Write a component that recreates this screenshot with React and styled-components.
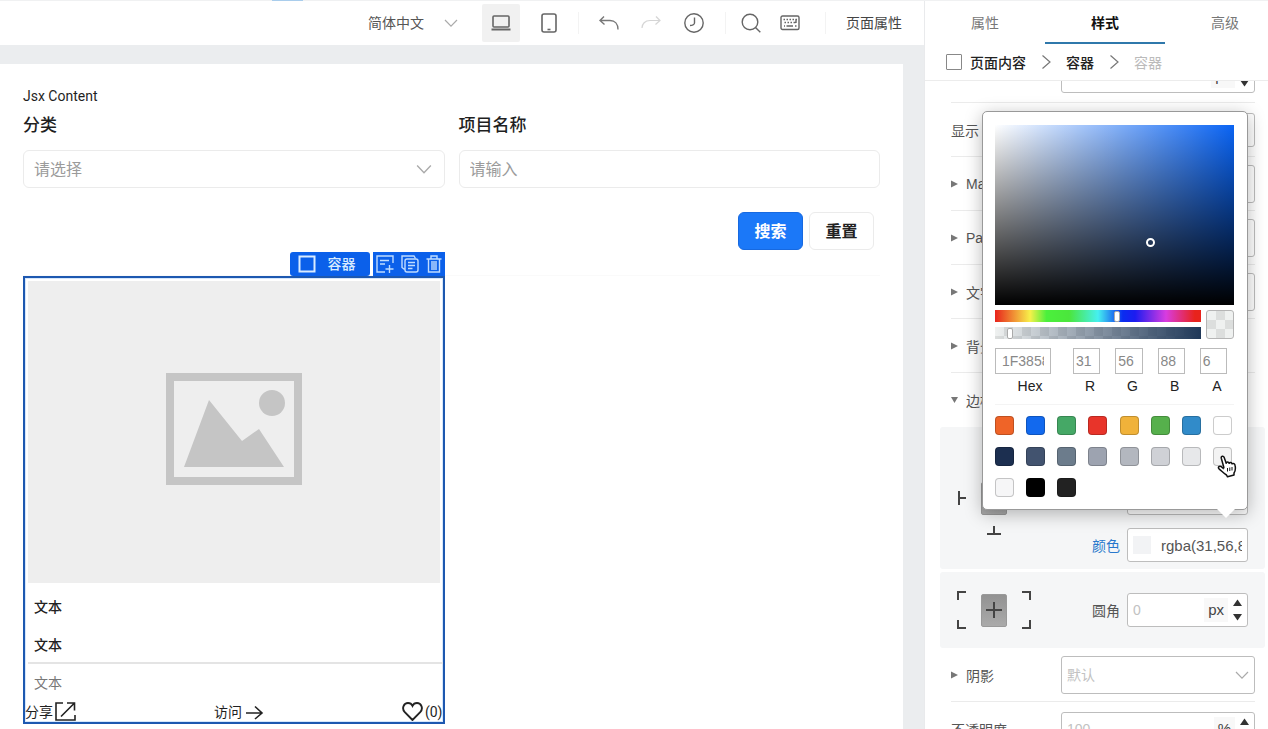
import React, { useState } from 'react';
import styled, { createGlobalStyle, css } from 'styled-components';

const GlobalStyle = createGlobalStyle`
  * {
    box-sizing: border-box;
  }

  body {
    margin: 0;
    overflow: hidden;
    font-family: Roboto, 'Noto Sans CJK SC', sans-serif;
    font-size: 14px;
    color: #1f1f1f;
  }

  button,
  input,
  select {
    margin: 0;
    font-family: inherit;
    font-size: inherit;
    color: inherit;
  }

  button {
    padding: 0;
    border: 0;
    background: none;
    cursor: pointer;
  }
`;

const Screen = styled.div`
  display: flex;
  flex-direction: column;
  height: 100vh;
  overflow: hidden;
  background: #fff;
`;

const TopStrip = styled.div`
  flex: none;
  height: 1px;
  padding-left: 272px;
  background: #f0f1f2;
`;

const TopStripMark = styled.div`
  width: 31px;
  height: 1px;
  background: #a9cdec;
`;

const Main = styled.div`
  display: flex;
  flex: 1;
  min-height: 0;
`;

const Workspace = styled.div`
  display: flex;
  flex: 1;
  flex-direction: column;
  min-width: 0;
`;

/* ---------- toolbar ---------- */

const Toolbar = styled.header`
  display: flex;
  flex: none;
  align-items: center;
  justify-content: flex-end;
  height: 44px;
  padding-right: 22px;
  color: #666;
`;

const LanguagePicker = styled.label`
  display: flex;
  align-items: center;
  margin-right: 24px;
  color: #555;
`;

const PlainSelect = styled.select`
  width: 76px;
  border: 0;
  padding: 0;
  background: none;
  appearance: none;
  outline: none;
`;

const ToolButton = styled.button`
  display: flex;
  align-items: center;
  justify-content: center;
  width: ${props => (props.$wide ? 38 : 20)}px;
  height: 38px;
  margin-right: ${props => props.$gap || 0}px;
  border-radius: 2px;
  background: ${props => (props.$active ? '#f1f1f1' : 'transparent')};
  opacity: ${props => (props.disabled ? 0.3 : 1)};
`;

const Separator = styled.span`
  width: 1px;
  height: 22px;
  margin-right: ${props => props.$gap}px;
  background: #f3f3f3;
`;

const TextButton = styled.button`
  padding-bottom: 2px;
  color: #444;
`;

/* ---------- canvas ---------- */

const Canvas = styled.main`
  flex: 1;
  min-height: 0;
  padding: 19px 21px 0 0;
  background: #ebedef;
`;

const Page = styled.div`
  height: 100%;
  padding: 22px 23px 0;
  background: #fff;
`;

const PageTitle = styled.div`
  margin-bottom: 7px;
  line-height: 20px;
`;

const Columns = styled.div`
  display: grid;
  grid-template-columns: 1fr 1fr;
  gap: 14px;
`;

const Field = styled.label`
  display: flex;
  flex-direction: column;
  gap: 13px;
  font-size: 17px;
  font-weight: 500;
  line-height: 24px;
`;

const FieldBox = styled.span`
  display: flex;
  align-items: center;
  height: 38px;
  padding: 0 12px 0 10px;
  border: 1px solid #ebebeb;
  border-radius: 6px;
  color: #9b9b9b;
  font-size: 16px;
`;

const bareControl = css`
  flex: 1;
  width: 100%;
  min-width: 0;
  border: 0;
  padding: 0;
  background: none;
  appearance: none;
  outline: none;

  &::placeholder {
    color: inherit;
    opacity: 1;
  }
`;

const BareInput = styled.input`
  ${bareControl}
`;

const BareSelect = styled.select`
  ${bareControl}
`;

const Actions = styled.div`
  display: flex;
  justify-content: flex-end;
  gap: 6px;
  padding: 24px 6px 25px 0;
  border-bottom: 1px solid #fafafa;
`;

const ActionButton = styled.button`
  width: 65px;
  height: 38px;
  padding-bottom: 2px;
  border: 1px solid ${props => (props.$primary ? '#1769e0' : '#ebebeb')};
  border-radius: 6px;
  background: ${props => (props.$primary ? '#1b78f8' : '#fff')};
  color: ${props => (props.$primary ? '#fff' : '#222')};
  font-size: 16px;
  font-weight: 600;
`;

const SelectedCard = styled.section`
  position: relative;
  border: 2px solid #1d58b0;
  box-shadow: inset 0 0 0 1px #d5e6fb;
`;

const SelectionTags = styled.div`
  position: absolute;
  right: -2px;
  bottom: 100%;
  display: flex;
  gap: 3px;
  margin-bottom: 2px;
  color: #d9ebff;
`;

const TagName = styled.span`
  display: flex;
  align-items: center;
  gap: 12px;
  width: 80px;
  height: 24px;
  padding-left: 8px;
  border-radius: 3px;
  background: #0b60ea;
  font-weight: 500;
  line-height: 20px;
`;

const TagTools = styled.span`
  display: flex;
  align-items: center;
  justify-content: space-between;
  width: 72px;
  height: 24px;
  padding: 0 3px;
  background: #0b60ea;

  button {
    display: flex;
  }
`;

const ImageBox = styled.div`
  display: flex;
  align-items: center;
  justify-content: center;
  height: 302px;
  margin: 3px 3px 5px;
  padding-bottom: 6px;
  background: #eee;
`;

const TextRow = styled.div`
  height: ${props => (props.$last ? 37 : 38)}px;
  margin-left: 3px;
  padding-left: 6px;
  border-bottom: ${props => (props.$line ? '2px solid #e4e4e4' : '0')};
  line-height: 38px;
  color: ${props => (props.$last ? '#777' : '#222')};
  font-weight: ${props => (props.$last ? 400 : 500)};
`;

const CardFooter = styled.div`
  display: flex;
  align-items: center;
  justify-content: space-between;
  height: 21px;
`;

const FooterButton = styled.button`
  display: flex;
  align-items: center;
  gap: 2px;
  line-height: 18px;
`;

/* ---------- settings panel ---------- */

const Panel = styled.aside`
  display: flex;
  flex: none;
  flex-direction: column;
  width: 344px;
  border-left: 1px solid #e9eaec;
  color: #555;
  font-family: 'Liberation Sans', 'Noto Sans CJK SC', sans-serif;
`;

const Tabs = styled.nav`
  display: flex;
  flex: none;
  height: 43px;
  overflow: hidden;
`;

const Tab = styled.button`
  flex: none;
  width: 120px;
  border-bottom: 2px solid ${props => (props.$active ? '#2f78ab' : 'transparent')};
  color: ${props => (props.$active ? '#111' : '#777')};
  font-weight: ${props => (props.$active ? 600 : 400)};
`;

const Breadcrumb = styled.div`
  display: flex;
  flex: none;
  align-items: center;
  height: 37px;
  padding-left: 21px;
  border-bottom: 1px solid #ececec;
`;

const CrumbBox = styled.span`
  width: 16px;
  height: 16px;
  margin-right: 8px;
  border: 1px solid #888;
  border-radius: 1px;
`;

const Crumb = styled.button`
  color: ${props => (props.$current ? '#bbb' : '#222')};
  font-weight: ${props => (props.$current ? 400 : 500)};
`;

const CrumbArrow = styled.svg`
  margin: 0 15px;
`;

const PanelBody = styled.div`
  flex: 1;
  min-height: 0;
  overflow: hidden;
`;

/* the list is scrolled part way through its first row */
const PanelList = styled.div`
  margin-top: -32px;
`;

const Row = styled.div`
  display: flex;
  align-items: center;
  justify-content: flex-end;
  height: 54px;
  margin: 0 13px 0 26px;
  border-bottom: ${props => (props.$noLine ? '0' : '1px solid #ebebeb')};
`;

const RowLabel = styled.span`
  display: flex;
  flex: 1;
  align-items: center;
  gap: 8px;
  white-space: nowrap;
`;

const Control = styled.span`
  display: flex;
  flex: none;
  align-items: center;
  width: ${props => (props.$small ? 121 : 194)}px;
  height: ${props => (props.$small || props.$low ? 34 : 38)}px;
  padding: 0 5px;
  border: 1px solid #bdbdbd;
  border-radius: 3px;
  background: #fff;
  color: #c2c2c2;
`;

const Unit = styled.span`
  padding: 0 4px;
  background: #f8f8f8;
  color: #444;
  font-size: 15px;
  line-height: 24px;
`;

const Stepper = styled.span`
  display: flex;
  flex-direction: column;
  gap: 8px;
  margin-left: 5px;

  button {
    display: flex;
  }
`;

const Group = styled.div`
  display: flex;
  align-items: center;
  justify-content: space-between;
  margin: 0 3px ${props => (props.$gap || 0)}px 15px;
  padding: ${props => (props.$tall ? '7px' : '19px')} 17px;
  background: #f5f6f7;
  border-radius: 3px;
`;

const GroupFields = styled.div`
  display: flex;
  flex-direction: column;
  gap: 13px;
`;

const GroupRow = styled.div`
  position: relative;
  display: flex;
  align-items: center;
  justify-content: flex-end;
  gap: 7px;
  color: ${props => (props.$changed ? '#2878cc' : '#555')};
`;

const EdgeGrid = styled.div`
  display: grid;
  grid-template-columns: 24px 26px 24px;
  grid-template-rows: repeat(3, 33px);
  grid-template-areas:
    '. top .'
    'left center right'
    '. bottom .';
`;

const CornerGrid = styled.div`
  display: grid;
  grid-template-columns: 24px 26px 24px;
  grid-template-rows: 19px 19px;
  grid-template-areas:
    'tl center tr'
    'bl center br';
`;

const EdgeButton = styled.button`
  display: flex;
  grid-area: ${props => props.$area};
  align-items: ${props => props.$align || 'center'};
  justify-content: ${props => props.$justify || 'center'};
`;

const CenterButton = styled(EdgeButton)`
  align-self: center;
  height: 33px;
  border: 1px solid #999;
  border-radius: 2px;
  background: linear-gradient(#929292, #aaa);
`;

const ColorChip = styled.span`
  flex: none;
  width: 18px;
  height: 18px;
  margin-right: 10px;
  background: rgba(31, 56, 88, 0.06);
`;

const ColorInput = styled(BareInput)`
  color: #555;
  font-size: 15px;
`;

/* ---------- color picker ---------- */

const Picker = styled.div`
  position: absolute;
  right: 0;
  bottom: calc(100% + 18px);
  z-index: 2;
  width: 266px;
  padding: 13px 13px 12px 12px;
  border: 1px solid #999;
  border-radius: 5px;
  background: #fff;
  box-shadow: 0 4px 18px rgba(0, 0, 0, 0.28);
  color: #222;

  &::after {
    content: '';
    position: absolute;
    right: 12px;
    top: 100%;
    border: 9px solid transparent;
    border-top-color: #fff;
    border-bottom: 0;
  }
`;

const Saturation = styled.div`
  position: relative;
  height: 180px;
  background: linear-gradient(to top, #000, transparent), linear-gradient(to right, #fff, transparent), #0a64f4;
`;

const SaturationDot = styled.span`
  position: absolute;
  left: 65%;
  top: 65%;
  width: 9px;
  height: 9px;
  margin: -4px;
  border: 2px solid #fff;
  border-radius: 50%;
`;

const Bars = styled.div`
  display: grid;
  grid-template-columns: 1fr 28px;
  gap: 5px;
  margin-top: 5px;
`;

const BarStack = styled.div`
  display: flex;
  flex-direction: column;
  gap: 5px;
`;

const checker = 'repeating-conic-gradient(#dcdedd 0 25%, #eff1f0 0 50%)';

const Slider = styled.input`
  display: block;
  width: 100%;
  height: 12px;
  margin: 0;
  appearance: none;
  outline: none;
  background: ${props =>
    props.$alpha
      ? `linear-gradient(to right, transparent, #1f3858), ${checker} 0 0 / 18px 18px`
      : 'linear-gradient(to right, #e8231c 0%, #f7f04a 17%, #4bf03c 25%, #4be63c 36%, #46f0f0 50%, #0a2df0 62%, #1c1cf0 68%, #d83ce0 83%, #e8231c 97%)'};

  &::-webkit-slider-thumb {
    width: 6px;
    height: 11px;
    border: 1px solid #aaa;
    border-radius: 2px;
    background: #fff;
    appearance: none;
  }
`;

const AlphaPreview = styled.div`
  border: 1px solid #b5b5b5;
  border-radius: 3px;
  background: ${checker} 0 0 / 18px 18px;
`;

const ColorFields = styled.div`
  display: grid;
  grid-template-columns: 70px repeat(4, 1fr);
  gap: 8px;
  padding: 9px 0;
`;

const ColorField = styled.label`
  display: flex;
  flex-direction: column;
  gap: 3px;
  line-height: 18px;
  text-align: center;

  input {
    width: 80%;
    height: 26px;
    padding: 0 ${props => (props.$hex ? 6 : 2)}px;
    border: 1px solid #bbb;
    outline: none;
    color: #888;
  }
`;

const Presets = styled.div`
  display: grid;
  grid-template-columns: repeat(8, 19px);
  justify-content: space-between;
  gap: 12px 0;
  padding: 11px 2px 0 0;
  border-top: 1px solid #f4f4f4;
`;

const Preset = styled.button`
  width: 19px;
  height: 19px;
  border: 1px solid rgba(0, 0, 0, 0.2);
  border-radius: 4px;
  background: ${props => props.$color};
`;

const HandCursor = styled.svg`
  position: absolute;
  right: 10px;
  bottom: 31px;
`;

const presets = [
  ['#ef6428', '橙'], ['#1269ee', '蓝'], ['#45a866', '绿'], ['#e8342a', '红'],
  ['#f0b23a', '黄'], ['#56b04c', '浅绿'], ['#318bc9', '天蓝'], ['#ffffff', '白'],
  ['#1c2f50', '深蓝'], ['#42536f', '灰蓝'], ['#6c7c8c', '灰 1'], ['#9da3b0', '灰 2'],
  ['#b3b7bf', '灰 3'], ['#cfd1d6', '灰 4'], ['#e7e8ea', '灰 5'], ['#f3f3f3', '灰 6'],
  ['#f6f6f7', '灰 7'], ['#000000', '黑'], ['#222222', '深灰'],
];

function ChevronDown({ size = 14, color = '#aaa' }) {
  return (
    <svg width={size} height={size} viewBox="0 0 14 14" fill="none" stroke={color} strokeWidth="1.2">
      <path d="M1 4L7 10.2L13 4" />
    </svg>
  );
}

function ChevronRight() {
  return (
    <CrumbArrow width="10" height="16" viewBox="0 0 10 16" fill="none" stroke="#777" strokeWidth="1.2">
      <path d="M1.5 1.5L9 8L1.5 14.5" />
    </CrumbArrow>
  );
}

function Caret({ down }) {
  return (
    <svg width="7" height="8" viewBox="0 0 7 8" fill="#777">
      <path d={down ? 'M0 1H7L3.5 7Z' : 'M0 0.5V7.5L7 4Z'} />
    </svg>
  );
}

function Steps() {
  return (
    <Stepper>
      <button aria-label="增加">
        <svg width="9" height="7" fill="#333"><path d="M0 7H9L4.5 0.5Z" /></svg>
      </button>
      <button aria-label="减少">
        <svg width="9" height="7" fill="#333"><path d="M0 0H9L4.5 6.5Z" /></svg>
      </button>
    </Stepper>
  );
}

function Stroke({ width, height, d }) {
  return (
    <svg width={width} height={height} fill="none" stroke="#444" strokeWidth="2">
      <path d={d} />
    </svg>
  );
}

function EditorToolbar() {
  return (
    <Toolbar>
      <LanguagePicker>
        <PlainSelect aria-label="语言">
          <option>简体中文</option>
        </PlainSelect>
        <ChevronDown />
      </LanguagePicker>
      <ToolButton $wide $active $gap={19} aria-label="桌面">
        <svg width="20" height="18" viewBox="0 0 20 18" fill="none" stroke="#666" strokeWidth="1.6">
          <rect x="2" y="2" width="16" height="11" rx="1" />
          <path d="M0.5 15.5H19.5" strokeWidth="2" />
        </svg>
      </ToolButton>
      <ToolButton $gap={19} aria-label="手机">
        <svg width="16" height="20" viewBox="0 0 16 20" fill="none" stroke="#666" strokeWidth="1.6">
          <rect x="1" y="1" width="14" height="18" rx="2" />
          <path d="M6.5 16.5H9.5" />
        </svg>
      </ToolButton>
      <Separator $gap={20} />
      <ToolButton $gap={22} aria-label="撤销">
        <svg width="20" height="14" viewBox="0 0 20 14" fill="none" stroke="#777" strokeWidth="1.4">
          <path d="M5 0.5L1 4.5L5.5 8.5M1 4.5H11C16 4.5 19 8 19 13.5" />
        </svg>
      </ToolButton>
      <ToolButton disabled $gap={23} aria-label="重做">
        <svg width="20" height="14" viewBox="0 0 20 14" fill="none" stroke="#777" strokeWidth="1.2">
          <path d="M15 0.5L19 4.5L14.5 8.5M19 4.5H9C4 4.5 1 8 1 12" />
        </svg>
      </ToolButton>
      <ToolButton $gap={21} aria-label="历史">
        <svg width="20" height="20" viewBox="0 0 20 20" fill="none" stroke="#666" strokeWidth="1.4">
          <circle cx="10" cy="10" r="9.2" />
          <path d="M10.5 4.5V10C10.5 11.5 8 12.5 6 12.5" />
        </svg>
      </ToolButton>
      <Separator $gap={15} />
      <ToolButton $gap={19} aria-label="搜索组件">
        <svg width="20" height="20" viewBox="0 0 20 20" fill="none" stroke="#666" strokeWidth="1.4">
          <circle cx="9" cy="9" r="7.8" />
          <path d="M14.5 14.5L19.3 19.3" />
        </svg>
      </ToolButton>
      <ToolButton $gap={25} aria-label="快捷键">
        <svg width="20" height="16" viewBox="0 0 20 16" fill="none" stroke="#666" strokeWidth="1.4">
          <rect x="1" y="1" width="18" height="13.5" rx="1.5" />
          <path d="M3.5 4.5H5M6.5 4.5H8M9.5 4.5H11M12.5 4.5H14M15.5 4.5H17M4.5 7.5H6M7.5 7.5H9M10.5 7.5H12M13.5 7.5H15.5M16 4V8M4 11H5M6.5 11H13M15 11H16.5" />
        </svg>
      </ToolButton>
      <Separator $gap={20} />
      <TextButton>页面属性</TextButton>
    </Toolbar>
  );
}

function ComponentCard() {
  return (
    <SelectedCard>
      <SelectionTags>
        <TagName>
          <svg width="18" height="18" fill="none" stroke="currentColor" strokeWidth="2">
            <rect x="1.5" y="1.5" width="15" height="15" />
          </svg>
          容器
        </TagName>
        <TagTools>
          <button aria-label="插入">
            <svg width="18" height="18" fill="none" stroke="#bfdcff" strokeWidth="1.4">
              <path d="M17 8V1H1V17H9M4 5.5H13M4 9H9M13.5 10V18M9.5 14H17.5" />
            </svg>
          </button>
          <button aria-label="复制">
            <svg width="18" height="18" fill="none" stroke="#bfdcff" strokeWidth="1.4">
              <path d="M4 14H3L1 12.5V1H13L14.5 3.5" />
              <rect x="4" y="4" width="13" height="13" rx="2" />
              <path d="M7 7.5H14M7 10.5H14M7 13.5H11.5" />
            </svg>
          </button>
          <button aria-label="删除">
            <svg width="16" height="18" fill="none" stroke="#bfdcff" strokeWidth="1.4">
              <path d="M0.5 4H15.5M5 4V1H11V4M2.5 4V17H13.5V4" />
              <path d="M6 6V15M8 6V15M10 6V15" />
            </svg>
          </button>
        </TagTools>
      </SelectionTags>
      <ImageBox>
        <svg width="136" height="112" viewBox="0 0 136 112" fill="#c5c5c5">
          <path d="M0 0H136V112H0ZM8 8V104H128V8Z" fillRule="evenodd" />
          <circle cx="106" cy="30" r="13" />
          <path d="M18 94L43 27L76 68L93 56L118 94Z" />
        </svg>
      </ImageBox>
      <TextRow>文本</TextRow>
      <TextRow $line>文本</TextRow>
      <TextRow $last>文本</TextRow>
      <CardFooter>
        <FooterButton>
          分享
          <svg width="21" height="19" fill="none" stroke="#222" strokeWidth="1.6">
            <path d="M8 1H1V18H5M16 18H20V13M6 14.5L19.5 1M12 1H19.5V8.5M1 18H20" />
          </svg>
        </FooterButton>
        <FooterButton>
          访问
          <svg width="20" height="16" fill="none" stroke="#222" strokeWidth="1.6">
            <path d="M2 9H18M11 2.5L18 9L11 15" />
          </svg>
        </FooterButton>
        <FooterButton>
          <svg width="21" height="19" viewBox="0 0 21 19" fill="none" stroke="#222" strokeWidth="1.9">
            <path d="M10.5 18L2.8 10.2C-0.8 6 2 1 6 1C8.2 1 9.8 2.3 10.5 3.8C11.2 2.3 12.8 1 15 1C19 1 21.8 6 18.2 10.2Z" />
          </svg>
          (0)
        </FooterButton>
      </CardFooter>
    </SelectedCard>
  );
}

function ColorPicker({ onPick }) {
  const fields = [['Hex', '1F3858'], ['R', '31'], ['G', '56'], ['B', '88'], ['A', '6']];

  return (
    <Picker>
      <Saturation>
        <SaturationDot />
      </Saturation>
      <Bars>
        <BarStack>
          <Slider type="range" min="0" max="360" defaultValue="214" aria-label="色相" />
          <Slider $alpha type="range" min="0" max="100" defaultValue="6" aria-label="透明度" />
        </BarStack>
        <AlphaPreview />
      </Bars>
      <ColorFields>
        {fields.map(([label, value]) => (
          <ColorField key={label} $hex={label === 'Hex'}>
            <input defaultValue={value} />
            {label}
          </ColorField>
        ))}
      </ColorFields>
      <Presets>
        {presets.map(([color, name]) => (
          <Preset key={name} $color={color} aria-label={name} onClick={() => onPick(color)} />
        ))}
      </Presets>
      <HandCursor width="20" height="23" viewBox="0 0 20 23" fill="#fff" stroke="#111" strokeWidth="1.5" strokeLinejoin="round">
        <path d="M7 13L4.3 3.2C3.8 1 6.4 0.4 7.1 2.3L9.2 8.2C9.4 6.8 11.5 6.6 12.1 8.3C12.8 7 14.6 7.2 15 8.8C16.4 7.8 17.8 8.8 18.1 10.5C18.7 13.5 18.8 15.5 17 18V20L10.5 21.8L9.5 20C7 18.5 4.5 15.8 2 13.8C0.3 12 2.6 10.6 4.2 11.6L7 14" />
        <path d="M10.5 13V16.5M12.8 12.5V16M15 12V15.5" strokeWidth="1" />
      </HandCursor>
    </Picker>
  );
}

function StylePanel() {
  const [color, setColor] = useState('rgba(31,56,88,0.06)');

  return (
    <Panel>
      <Tabs>
        <Tab>属性</Tab>
        <Tab $active>样式</Tab>
        <Tab>高级</Tab>
      </Tabs>
      <Breadcrumb>
        <CrumbBox />
        <Crumb>页面内容</Crumb>
        <ChevronRight />
        <Crumb>容器</Crumb>
        <ChevronRight />
        <Crumb $current>容器</Crumb>
      </Breadcrumb>
      <PanelBody>
        <PanelList>
          <Row>
            <Control $low>
              <BareInput aria-label="高度" />
              <Unit>px</Unit>
              <Steps />
            </Control>
          </Row>
          <Row>
            <RowLabel>显示</RowLabel>
            <Control $low />
          </Row>
          {['Margin', 'Padding', '文字'].map(name => (
            <Row key={name}>
              <RowLabel><Caret />{name}</RowLabel>
              <Control />
            </Row>
          ))}
          <Row>
            <RowLabel><Caret />背景</RowLabel>
          </Row>
          <Row $noLine>
            <RowLabel><Caret down />边框</RowLabel>
          </Row>
          <Group $tall $gap={3}>
            <EdgeGrid>
              <EdgeButton $area="top" aria-label="上边框">
                <Stroke width="14" height="10" d="M0 2H14M7 2V10" />
              </EdgeButton>
              <EdgeButton $area="left" $justify="flex-start" aria-label="左边框">
                <Stroke width="9" height="14" d="M2 0V14M2 7H9" />
              </EdgeButton>
              <CenterButton $area="center" aria-label="全部边框" />
              <EdgeButton $area="right" $justify="flex-end" aria-label="右边框">
                <Stroke width="9" height="14" d="M7 0V14M7 7H0" />
              </EdgeButton>
              <EdgeButton $area="bottom" aria-label="下边框">
                <Stroke width="14" height="10" d="M0 8H14M7 8V0" />
              </EdgeButton>
            </EdgeGrid>
            <GroupFields>
              <GroupRow><Control $small /></GroupRow>
              <GroupRow><Control $small /></GroupRow>
              <GroupRow $changed>
                <label htmlFor="border-color">颜色</label>
                <Control $small>
                  <ColorChip />
                  <ColorInput id="border-color" value={color} onChange={e => setColor(e.target.value)} />
                </Control>
                <ColorPicker onPick={setColor} />
              </GroupRow>
            </GroupFields>
          </Group>
          <Group>
            <CornerGrid>
              <EdgeButton $area="tl" $align="flex-start" $justify="flex-start" aria-label="左上角">
                <Stroke width="9" height="9" d="M1 9V1H9" />
              </EdgeButton>
              <EdgeButton $area="tr" $align="flex-start" $justify="flex-end" aria-label="右上角">
                <Stroke width="9" height="9" d="M8 9V1H0" />
              </EdgeButton>
              <CenterButton $area="center" aria-label="全部圆角">
                <Stroke width="16" height="16" d="M8 0V16M0 8H16" />
              </CenterButton>
              <EdgeButton $area="bl" $align="flex-end" $justify="flex-start" aria-label="左下角">
                <Stroke width="9" height="9" d="M1 0V8H9" />
              </EdgeButton>
              <EdgeButton $area="br" $align="flex-end" $justify="flex-end" aria-label="右下角">
                <Stroke width="9" height="9" d="M8 0V8H0" />
              </EdgeButton>
            </CornerGrid>
            <GroupRow>
              <label htmlFor="radius">圆角</label>
              <Control $small>
                <BareInput id="radius" placeholder="0" />
                <Unit>px</Unit>
                <Steps />
              </Control>
            </GroupRow>
          </Group>
          <Row>
            <RowLabel><Caret />阴影</RowLabel>
            <Control>
              <BareSelect aria-label="阴影">
                <option>默认</option>
              </BareSelect>
              <ChevronDown />
            </Control>
          </Row>
          <Row>
            <RowLabel>不透明度</RowLabel>
            <Control $low>
              <BareInput aria-label="不透明度" placeholder="100" />
              <Unit>%</Unit>
              <Steps />
            </Control>
          </Row>
        </PanelList>
      </PanelBody>
    </Panel>
  );
}

export default function App() {
  return (
    <Screen>
      <GlobalStyle />
      <TopStrip>
        <TopStripMark />
      </TopStrip>
      <Main>
        <Workspace>
          <EditorToolbar />
          <Canvas>
            <Page>
              <PageTitle>Jsx Content</PageTitle>
              <Columns>
                <Field>
                  分类
                  <FieldBox>
                    <BareSelect>
                      <option>请选择</option>
                    </BareSelect>
                    <ChevronDown size={16} />
                  </FieldBox>
                </Field>
                <Field>
                  项目名称
                  <FieldBox>
                    <BareInput placeholder="请输入" />
                  </FieldBox>
                </Field>
              </Columns>
              <Actions>
                <ActionButton $primary>搜索</ActionButton>
                <ActionButton>重置</ActionButton>
              </Actions>
              <Columns>
                <ComponentCard />
              </Columns>
            </Page>
          </Canvas>
        </Workspace>
        <StylePanel />
      </Main>
    </Screen>
  );
}
